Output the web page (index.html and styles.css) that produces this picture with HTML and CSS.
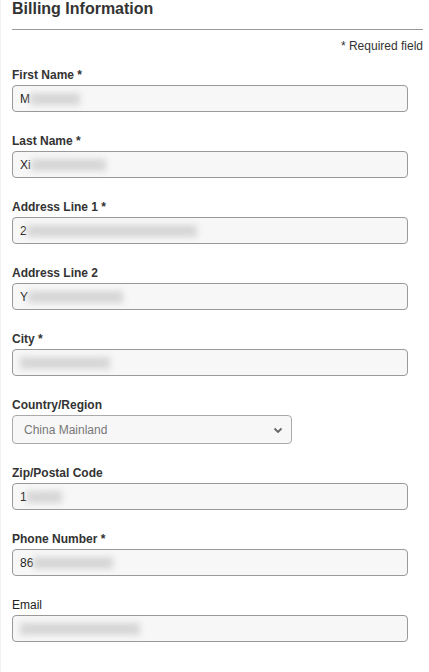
FILE: index.html
```html
<html lang="en">

<head>
    <meta charset="UTF-8">
    <meta name="viewport" content="width=device-width, initial-scale=1.0">
    <title>Billing Information</title>
    <link rel="stylesheet" href="styles.css">
</head>

<body>
    <div class="billing">
        <h2>Billing Information</h2>
        <div class="required-note">* Required field</div>

        <div class="field">
            <label>First Name *</label>
            <div class="input"><span class="ch">M</span><span class="smudge w50"></span></div>
        </div>

        <div class="field">
            <label>Last Name *</label>
            <div class="input"><span class="ch">Xi</span><span class="smudge w75"></span></div>
        </div>

        <div class="field">
            <label>Address Line 1 *</label>
            <div class="input"><span class="ch">2</span><span class="smudge w170"></span></div>
        </div>

        <div class="field">
            <label>Address Line 2</label>
            <div class="input"><span class="ch">Y</span><span class="smudge w95"></span></div>
        </div>

        <div class="field">
            <label>City *</label>
            <div class="input"><span class="smudge w90"></span></div>
        </div>

        <div class="field">
            <label>Country/Region</label>
            <div class="select-wrap">
                <select class="select">
                    <option>China Mainland</option>
                </select>
                <svg class="chevron" width="10" height="7" viewBox="0 0 10 7">
                    <path d="M1.5 1.5 L5 5 L8.5 1.5" fill="none" stroke="#666" stroke-width="1.8" />
                </svg>
            </div>
        </div>

        <div class="field">
            <label>Zip/Postal Code</label>
            <div class="input"><span class="ch">1</span><span class="smudge w35"></span></div>
        </div>

        <div class="field">
            <label>Phone Number *</label>
            <div class="input"><span class="ch">86</span><span class="smudge w80"></span></div>
        </div>

        <div class="field">
            <label class="plain">Email</label>
            <div class="input"><span class="smudge w120"></span></div>
        </div>
    </div>
</body>

</html>
```

FILE: styles.css
```css
body {
    margin: 0;
    background-color: #fff;
    font-family: "Liberation Sans", Arial, sans-serif;
    color: #333;
    border-left: 1px solid #f2f2f2;
}

.billing {
    padding: 0 6px 0 11px;
}

.billing h2 {
    margin: 0;
    font-size: 16px;
    line-height: 18px;
    padding-top: 0;
    height: 29px;
    border-bottom: 1px solid #999;
    color: #333;
}

.required-note {
    text-align: right;
    font-size: 12px;
    line-height: 14px;
    margin-top: 9px;
    margin-bottom: 15px;
    color: #333;
}

.field {
    margin-bottom: 22px;
}

.field label {
    display: block;
    font-size: 12px;
    font-weight: bold;
    line-height: 14px;
    margin-bottom: 3px;
    color: #333;
}

.field label.plain {
    font-weight: normal;
    color: #222;
}

.input {
    width: 396px;
    height: 27px;
    box-sizing: border-box;
    border: 1px solid #999;
    border-radius: 4px;
    background-color: #f7f7f7;
    padding: 0 7px;
    display: flex;
    align-items: center;
    font-size: 12px;
    color: #222;
}

.ch {
    line-height: 14px;
}

.smudge {
    display: inline-block;
    height: 12px;
    background-color: #d6d6d6;
    filter: blur(3px);
}

.w35 { width: 35px; }
.w50 { width: 50px; }
.w75 { width: 75px; }
.w80 { width: 80px; }
.w90 { width: 90px; }
.w95 { width: 95px; }
.w120 { width: 120px; }
.w170 { width: 170px; }

.select-wrap {
    position: relative;
    width: 280px;
}

.select {
    appearance: none;
    -webkit-appearance: none;
    width: 280px;
    height: 29px;
    box-sizing: border-box;
    border: 1px solid #aaa;
    border-radius: 4px;
    background-color: #f7f7f7;
    padding: 0 11px;
    font-family: "Liberation Sans", Arial, sans-serif;
    font-size: 12px;
    color: #777;
}

.chevron {
    position: absolute;
    right: 9px;
    top: 12px;
}
```
